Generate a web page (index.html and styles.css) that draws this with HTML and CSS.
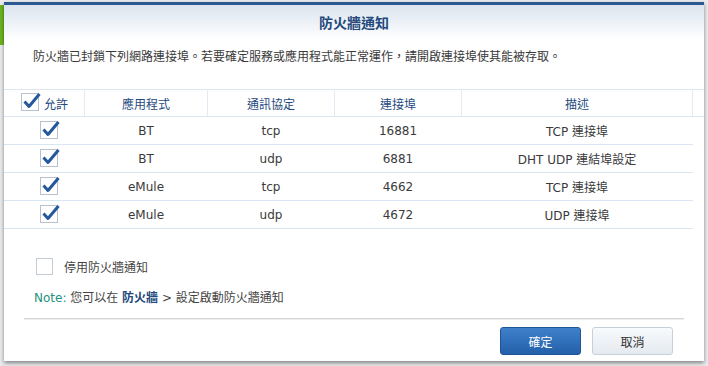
FILE: index.html
```html
<!DOCTYPE html>
<html lang="zh-Hant">
<head>
  <meta charset="utf-8">
  <title>防火牆通知</title>
  <link rel="stylesheet" href="styles.css">
</head>
<body>
  <div class="dialog">
    <div class="dialog-head">防火牆通知</div>
    <p class="desc">防火牆已封鎖下列網路連接埠。若要確定服務或應用程式能正常運作，請開啟連接埠使其能被存取。</p>

    <table class="port-table">
      <tr>
        <th class="col-allow">
          <span class="allow-head">
            <svg class="check" width="20" height="20" viewBox="0 0 20 20"><rect x="0.5" y="2.5" width="17" height="17" fill="#fff" stroke="#b8c2cf"/><path d="M3.5 10.5 L8 15.5 L18.5 3" fill="none" stroke="#24579b" stroke-width="3" stroke-linejoin="round"/></svg>
            允許
          </span>
        </th>
        <th class="col-app">應用程式</th>
        <th class="col-proto">通訊協定</th>
        <th class="col-port">連接埠</th>
        <th class="col-desc">描述</th>
        <th class="col-rest"></th>
      </tr>
      <tr>
        <td><svg class="check" width="20" height="20" viewBox="0 0 20 20"><rect x="0.5" y="2.5" width="17" height="17" fill="#fff" stroke="#b8c2cf"/><path d="M3.5 10.5 L8 15.5 L18.5 3" fill="none" stroke="#24579b" stroke-width="3" stroke-linejoin="round"/></svg></td>
        <td>BT</td><td>tcp</td><td>16881</td><td>TCP 連接埠</td><td class="rest"></td>
      </tr>
      <tr>
        <td><svg class="check" width="20" height="20" viewBox="0 0 20 20"><rect x="0.5" y="2.5" width="17" height="17" fill="#fff" stroke="#b8c2cf"/><path d="M3.5 10.5 L8 15.5 L18.5 3" fill="none" stroke="#24579b" stroke-width="3" stroke-linejoin="round"/></svg></td>
        <td>BT</td><td>udp</td><td>6881</td><td>DHT UDP 連結埠設定</td><td class="rest"></td>
      </tr>
      <tr>
        <td><svg class="check" width="20" height="20" viewBox="0 0 20 20"><rect x="0.5" y="2.5" width="17" height="17" fill="#fff" stroke="#b8c2cf"/><path d="M3.5 10.5 L8 15.5 L18.5 3" fill="none" stroke="#24579b" stroke-width="3" stroke-linejoin="round"/></svg></td>
        <td>eMule</td><td>tcp</td><td>4662</td><td>TCP 連接埠</td><td class="rest"></td>
      </tr>
      <tr>
        <td><svg class="check" width="20" height="20" viewBox="0 0 20 20"><rect x="0.5" y="2.5" width="17" height="17" fill="#fff" stroke="#b8c2cf"/><path d="M3.5 10.5 L8 15.5 L18.5 3" fill="none" stroke="#24579b" stroke-width="3" stroke-linejoin="round"/></svg></td>
        <td>eMule</td><td>udp</td><td>4672</td><td>UDP 連接埠</td><td class="rest"></td>
      </tr>
    </table>

    <label class="option"><span class="box"></span>停用防火牆通知</label>
    <p class="note"><span class="note-tag">Note:</span> 您可以在 <b>防火牆</b> &gt; 設定啟動防火牆通知</p>

    <div class="dialog-foot">
      <button class="btn btn-ok">確定</button>
      <button class="btn btn-cancel">取消</button>
    </div>
  </div>
</body>
</html>
```

FILE: styles.css
```css
body {
  margin: 0;
  width: 708px;
  height: 366px;
  overflow: hidden;
  font-family: "DejaVu Sans", "Noto Sans CJK TC", sans-serif;
  font-size: 12px;
  color: #3a3a3a;
  background: #e9ebee linear-gradient(#6db421, #6db421) no-repeat 0 5px / 4px 40px;
}
.dialog {
  margin: 2px 0 0 4px;
  width: 700px;
  height: 356px;
  background: #fff;
  border-top: 3px solid #2b5891;
  box-shadow: 0 2px 4px rgba(0, 0, 0, 0.45);
  display: flex;
  flex-direction: column;
}
.dialog-head {
  height: 35px;
  line-height: 36px;
  text-align: center;
  font-size: 14px;
  font-weight: bold;
  color: #23497c;
  background: linear-gradient(#dbe4ef, #fff);
}
.desc {
  margin: 0;
  height: 49px;
  padding: 8px 0 0 29px;
  box-sizing: border-box;
  line-height: 18px;
}
.port-table {
  width: 700px;
  border-collapse: collapse;
  table-layout: fixed;
}
.port-table th {
  height: 26px;
  padding: 0;
  font-weight: normal;
  color: #1f4a80;
  border-top: 1px solid #dde5ee;
  border-bottom: 1px solid #dde5ee;
  border-right: 1px solid #e4eaf1;
}
.port-table th.col-rest {
  border-right: none;
}
.port-table td {
  height: 27px;
  padding: 0;
  text-align: center;
  border-bottom: 1px solid #d9e5f3;
}
.port-table td.rest {
  border-bottom: none;
}
.col-allow { width: 80px; }
.col-app { width: 122px; }
.col-proto { width: 126px; }
.col-port { width: 126px; }
.col-desc { width: 230px; }
.allow-head {
  display: flex;
  align-items: center;
  gap: 3px;
  padding-left: 17px;
}
.check {
  display: block;
  margin: 0 auto;
}
.allow-head .check {
  margin: -4px 0 0 0;
}
.port-table td .check {
  margin: -3px 0 0 36px;
}
.option {
  margin: 28px 0 0 32px;
  height: 18px;
  display: flex;
  align-items: center;
  gap: 11px;
  color: #444;
}
.box {
  width: 15px;
  height: 15px;
  border: 1px solid #c3cbd5;
  background: #fff;
}
.note {
  margin: 14px 0 0 30px;
  line-height: 18px;
  color: #444;
}
.note-tag {
  color: #23937e;
}
.note b {
  color: #23497c;
}
.dialog-foot {
  margin: 11px 20px 0 20px;
  padding: 8px 11px 0 0;
  border-top: 1px solid #d4d4d4;
  box-shadow: inset 0 1px 0 #eee;
  display: flex;
  justify-content: flex-end;
  gap: 11px;
}
.btn {
  width: 81px;
  height: 28px;
  border-radius: 3px;
  font-family: "DejaVu Sans", "Noto Sans CJK TC", sans-serif;
  font-size: 12px;
  cursor: pointer;
}
.btn-ok {
  color: #fff;
  border: 1px solid #1e5597;
  background: linear-gradient(#3f80cb, #2360a9);
}
.btn-cancel {
  color: #333;
  border: 1px solid #c6d0db;
  background: linear-gradient(#f8fafc, #e5eaf0);
}
```
